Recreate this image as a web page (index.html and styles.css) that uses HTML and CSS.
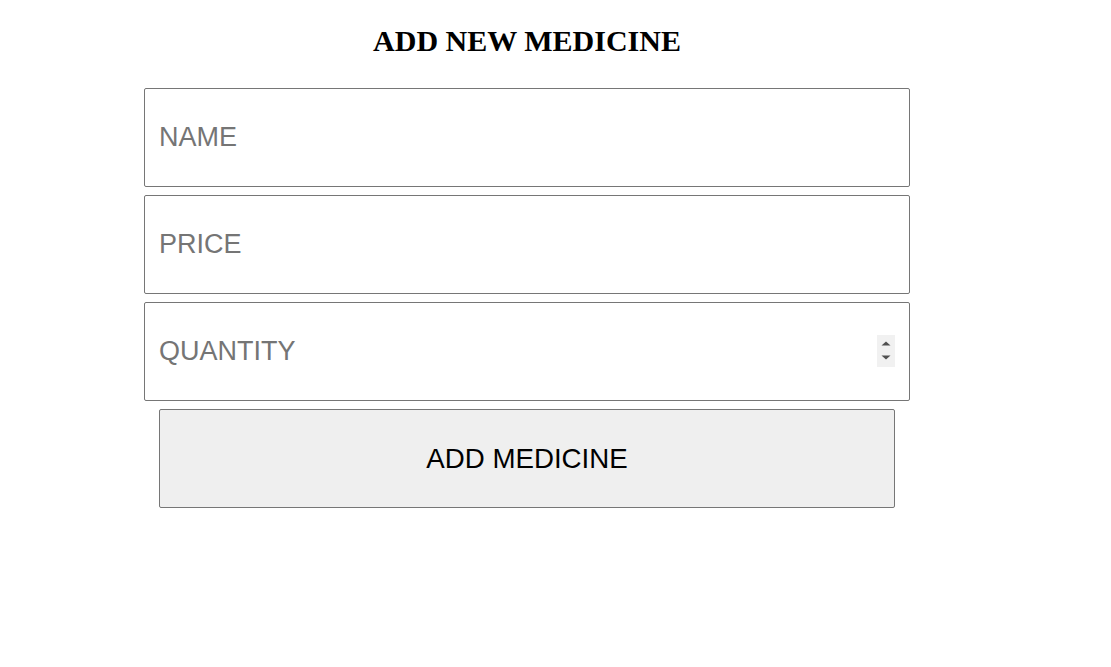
FILE: index.html
```html
<!DOCTYPE html>
<html>

<head>
  <meta charset="UTF-8">
  <meta name="viewport" content="width=device-width, initial-scale=1.0">
  <title>Add Medicine</title>

  <link rel="stylesheet" href="styles.css">
</head>

<body>
  <div class="container">
    <h2>ADD NEW MEDICINE</h2>
    <form class="form" onsubmit="return false;">
      <input type="text" name="name" placeholder="NAME">
      <input type="text" name="price" placeholder="PRICE">
      <div class="field">
        <input type="number" name="quantity" placeholder="QUANTITY">
        <span class="spin">
          <svg width="18" height="32" viewBox="0 0 18 32">
            <path d="M4.5 10.5 L9 6.5 L13.5 10.5 Z" fill="#505050" />
            <path d="M4.5 20.5 L13.5 20.5 L9 24.5 Z" fill="#505050" />
          </svg>
        </span>
      </div>
      <button type="submit">ADD MEDICINE</button>
    </form>
  </div>
</body>

</html>
```

FILE: styles.css
```css
* {
  box-sizing: border-box;
}

body {
  margin: 0;
  font-family: "Liberation Serif", serif;
  background: white;
}

.container {
  width: 766px;
  margin-left: 144px;
  padding-top: 24px;
}

h2 {
  margin: 0 0 30px;
  font-size: 30px;
  text-align: center;
}

.form {
  display: flex;
  flex-direction: column;
  align-items: center;
  gap: 8px;
}

.field {
  position: relative;
  width: 100%;
}

.form input {
  display: block;
  width: 100%;
  height: 99px;
  padding: 0 14px;
  font-family: "Liberation Sans", Arial, sans-serif;
  font-size: 27px;
  border: 1px solid #767676;
  border-radius: 2px;
  background: white;
}

.form input::placeholder {
  color: #757575;
}

.form input::-webkit-inner-spin-button {
  -webkit-appearance: none;
  display: none;
}

.spin {
  position: absolute;
  right: 15px;
  top: 33px;
  width: 18px;
  height: 32px;
  background: #f1f1f1;
  pointer-events: none;
}

.spin svg {
  display: block;
}

.form button {
  width: 736px;
  height: 99px;
  font-family: "Liberation Sans", Arial, sans-serif;
  font-size: 27.7px;
  color: black;
  background: #efefef;
  border: 1px solid #767676;
  border-radius: 2px;
}
```
